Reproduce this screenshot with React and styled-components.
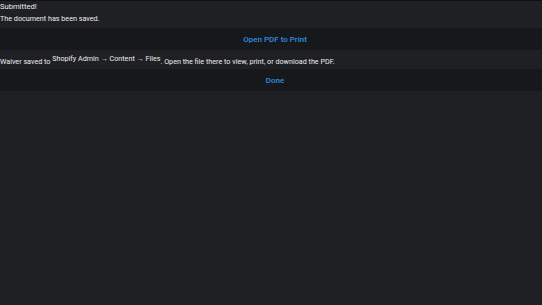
import React from "react"
import styled, { createGlobalStyle } from "styled-components"

const GlobalStyle = createGlobalStyle`
  html, body {
    margin: 0;
    padding: 0;
    background: #1f2023;
  }
  body {
    font-family: Roboto, "Liberation Sans", sans-serif;
    -webkit-font-smoothing: antialiased;
  }
`

const Screen = styled.main`
  min-height: 305px;
  background: #1f2023;
  border-top: 1px solid #0f1012;
  color: #ececee;
  display: flex;
  flex-direction: column;
`

const Title = styled.div`
  font-size: 7.6px;
  font-weight: 400;
  line-height: 11px;
`

const Message = styled.div`
  font-size: 7.2px;
  line-height: 10px;
  padding: ${(p) => p.$pad || "2px 0 4px"};
`

const Inline = styled.span`
  line-height: 0;
  vertical-align: 3px;
`

const ActionButton = styled.button`
  all: unset;
  display: flex;
  align-items: center;
  justify-content: center;
  height: 22px;
  padding-left: 8px;
  background: #17181b;
  color: #2f8de3;
  font-family: Roboto, "Liberation Sans", sans-serif;
  font-size: 8px;
  font-weight: 500;
  cursor: pointer;
`

export default function App() {
  return (
    <>
      <GlobalStyle />
      <Screen>
        <Title>Submitted!</Title>
        <Message>The document has been saved.</Message>
        <ActionButton>Open PDF to Print</ActionButton>
        <Message $pad="7px 0 2px">
          Waiver saved to <Inline>Shopify Admin → Content → Files</Inline>. Open the
          file there to view, print, or download the PDF.
        </Message>
        <ActionButton>Done</ActionButton>
      </Screen>
    </>
  )
}
